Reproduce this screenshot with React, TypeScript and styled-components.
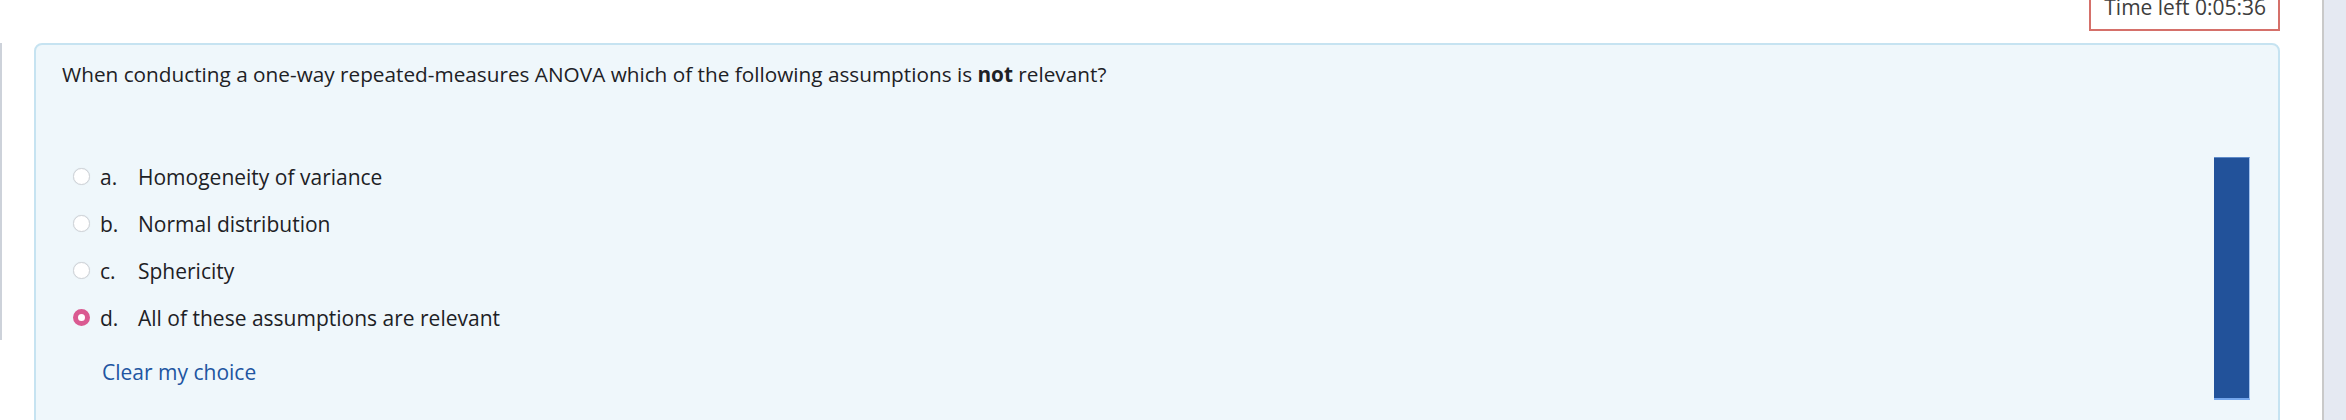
import React from "react";
import styled, { createGlobalStyle } from "styled-components";

const GlobalStyle = createGlobalStyle`
  html, body {
    margin: 0;
    padding: 0;
    background: #ffffff;
  }
  body {
    font-family: "Open Sans", Lato, "Liberation Sans", sans-serif;
    color: #1d2125;
  }
`;

const Page = styled.div`
  display: flex;
  width: 2346px;
  height: 420px;
  overflow: hidden;
`;

const Main = styled.div`
  width: 2322px;
  flex-shrink: 0;
  box-sizing: border-box;
  padding-right: 42px;
  display: flex;
  flex-direction: column;
`;

const Sidebar = styled.aside`
  flex: 1;
  border-left: 2px solid #c9c9c9;
  background: #e5e9f2;
`;

const TimerRow = styled.div`
  display: flex;
  justify-content: flex-end;
`;

const TimerBox = styled.div`
  margin-top: -14px;
  border: 2px solid #d5706a;
  background: #ffffff;
  padding: 4px 12px 7px 13px;
  font-size: 21px;
  line-height: 30px;
  color: #3d3d3d;
`;

const QuestionRow = styled.div`
  display: flex;
  align-items: flex-start;
  gap: 32px;
  margin-top: 12px;
`;

const InfoEdge = styled.div`
  width: 2px;
  height: 297px;
  background: #cdd2da;
`;

const Card = styled.section`
  flex: 1;
  box-sizing: border-box;
  height: 384px;
  border: 2px solid #c6e3f1;
  border-radius: 8px;
  background: #eff7fb;
  padding: 14px 28px 0 26px;
`;

const QuestionText = styled.p`
  margin: 0;
  font-size: 20.75px;
  line-height: 30px;
  color: #1d2125;

  strong {
    font-weight: 700;
  }
`;

const AnswerArea = styled.div`
  display: flex;
  align-items: flex-start;
  margin-top: 64px;
`;

const Answers = styled.div`
  flex: 1;
  padding-left: 11px;
`;

const OptionRow = styled.label`
  display: flex;
  align-items: center;
  height: 47px;
  font-size: 21px;
  line-height: 30px;
  color: #1d2125;
`;

const Radio = styled.span<{ $checked?: boolean }>`
  box-sizing: border-box;
  width: 17px;
  height: 17px;
  border-radius: 50%;
  margin-right: 10px;
  background: #ffffff;
  border: ${(p) => (p.$checked ? "5px solid #da5a91" : "1px solid #cfd3d8")};
  box-shadow: ${(p) => (p.$checked ? "none" : "0 0 1px rgba(0,0,0,0.12)")};
`;

const Letter = styled.span`
  width: 38px;
`;

const ClearLink = styled.a`
  display: inline-block;
  margin-top: 16px;
  margin-left: 29px;
  font-size: 21px;
  line-height: 30px;
  color: #2155a1;
  text-decoration: none;
`;

const Bar = styled.div`
  width: 36px;
  height: 243px;
  box-sizing: border-box;
  margin-top: 4px;
  background: #22529a;
  border-top: 1px solid #5f8bc8;
  border-right: 1px solid #a3c3ee;
  border-bottom: 2px solid #74a6ec;
`;

const options = [
  { letter: "a.", text: "Homogeneity of variance" },
  { letter: "b.", text: "Normal distribution" },
  { letter: "c.", text: "Sphericity" },
  { letter: "d.", text: "All of these assumptions are relevant" },
];

const App: React.FC = () => {
  const selected = 3;
  return (
    <>
      <GlobalStyle />
      <Page>
        <Main>
          <TimerRow>
            <TimerBox>Time left 0:05:36</TimerBox>
          </TimerRow>
          <QuestionRow>
            <InfoEdge />
            <Card>
              <QuestionText>
                When conducting a one-way repeated-measures ANOVA which of the
                following assumptions is <strong>not</strong> relevant?
              </QuestionText>
              <AnswerArea>
                <Answers>
                  {options.map((o, i) => (
                    <OptionRow key={o.letter}>
                      <Radio $checked={i === selected} />
                      <Letter>{o.letter}</Letter>
                      <span>{o.text}</span>
                    </OptionRow>
                  ))}
                  <ClearLink href="#">Clear my choice</ClearLink>
                </Answers>
                <Bar />
              </AnswerArea>
            </Card>
          </QuestionRow>
        </Main>
        <Sidebar />
      </Page>
    </>
  );
};

export default App;
